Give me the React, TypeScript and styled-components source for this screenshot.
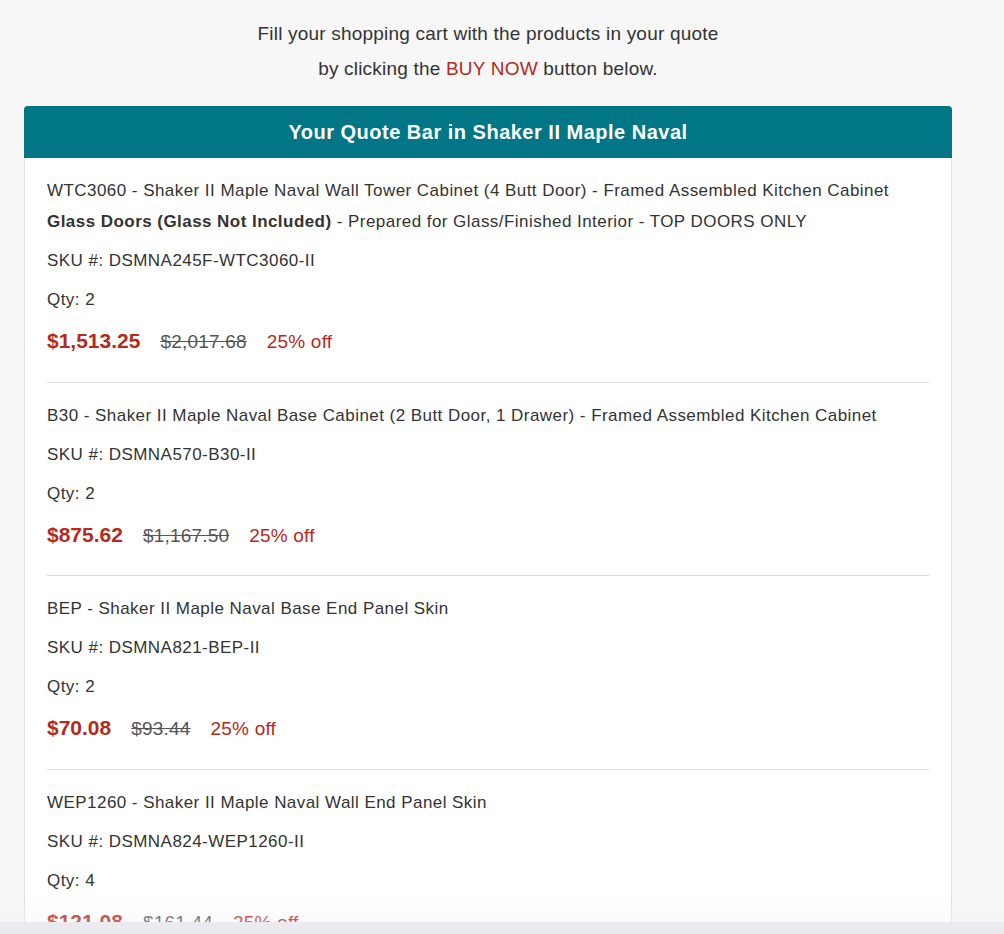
import React from "react";
import styled, {createGlobalStyle} from "styled-components";

interface QuoteItem {
    title: React.ReactNode;
    sku: string;
    qty: number;
    price: string;
    was: string;
    off: string;
}

const ITEMS: QuoteItem[] = [
    {
        title: (
            <>
                WTC3060 - Shaker II Maple Naval Wall Tower Cabinet (4 Butt Door) - Framed Assembled Kitchen Cabinet{" "}
                <b>Glass Doors (Glass Not Included)</b> - Prepared for Glass/Finished Interior - TOP DOORS ONLY
            </>
        ),
        sku: "DSMNA245F-WTC3060-II",
        qty: 2,
        price: "$1,513.25",
        was: "$2,017.68",
        off: "25% off",
    },
    {
        title: "B30 - Shaker II Maple Naval Base Cabinet (2 Butt Door, 1 Drawer) - Framed Assembled Kitchen Cabinet",
        sku: "DSMNA570-B30-II",
        qty: 2,
        price: "$875.62",
        was: "$1,167.50",
        off: "25% off",
    },
    {
        title: "BEP - Shaker II Maple Naval Base End Panel Skin",
        sku: "DSMNA821-BEP-II",
        qty: 2,
        price: "$70.08",
        was: "$93.44",
        off: "25% off",
    },
    {
        title: "WEP1260 - Shaker II Maple Naval Wall End Panel Skin",
        sku: "DSMNA824-WEP1260-II",
        qty: 4,
        price: "$121.08",
        was: "$161.44",
        off: "25% off",
    },
];

export default function App() {
    return (
        <>
            <GlobalStyle />
            <Page>
                <Intro>
                    Fill your shopping cart with the products in your quote
                    <br />
                    by clicking the <Red>BUY NOW</Red> button below.
                </Intro>
                <Card>
                    <Header>Your Quote Bar in Shaker II Maple Naval</Header>
                    <List>
                        {ITEMS.map((it, i) => (
                            <Item key={i}>
                                <Line>{it.title}</Line>
                                <Line>SKU #: {it.sku}</Line>
                                <Line>Qty: {it.qty}</Line>
                                <PriceRow>
                                    <Price>{it.price}</Price>
                                    <Was>{it.was}</Was>
                                    <Off>{it.off}</Off>
                                </PriceRow>
                            </Item>
                        ))}
                    </List>
                </Card>
            </Page>
            <BottomFade />
        </>
    );
}

// ---------------------------------------------------------------------------
// Styles
// ---------------------------------------------------------------------------

const RED = "#b52a1c";

const GlobalStyle = createGlobalStyle`
    html, body {
        margin: 0;
        padding: 0;
        background: #f7f7f7;
        overflow: hidden;
    }
    body {
        font-family: "Liberation Sans", Arial, Helvetica, sans-serif;
        color: #333;
    }
`;

const Page = styled.div`
    width: 928px;
    padding: 16px 0 0 24px;
`;

const Intro = styled.p`
    margin: 0 0 20px;
    text-align: center;
    font-size: 19px;
    letter-spacing: 0.2px;
    line-height: 35px;
    color: #333;
`;

const Red = styled.span`
    color: ${RED};
`;

const Card = styled.div`
    background: #fff;
    border: 1px solid #e2e2e2;
    border-top: none;
    border-radius: 4px 4px 0 0;
`;

const Header = styled.div`
    margin: 0 -1px;
    height: 52px;
    background: #007686;
    border-radius: 4px 4px 0 0;
    color: #fff;
    font-weight: 700;
    font-size: 20px;
    letter-spacing: 0.5px;
    display: flex;
    align-items: center;
    justify-content: center;
`;

const List = styled.div`
    padding: 0 22px;
`;

const Item = styled.div`
    padding: 17px 0 21.5px;
    border-bottom: 1px solid #dcdcdc;
`;

const Line = styled.p`
    margin: 0 0 8px;
    font-size: 17px;
    letter-spacing: 0.45px;
    line-height: 31px;
    color: #333;
`;

const PriceRow = styled.div`
    display: flex;
    align-items: baseline;
    gap: 20px;
    line-height: 36px;
`;

const Price = styled.span`
    color: ${RED};
    font-weight: 700;
    font-size: 21px;
`;

const Was = styled.span`
    color: #555;
    font-size: 19px;
    letter-spacing: 0.2px;
    text-decoration: line-through;
`;

const Off = styled.span`
    color: ${RED};
    font-size: 19px;
    letter-spacing: 0.2px;
`;

const BottomFade = styled.div`
    position: fixed;
    left: 0;
    right: 0;
    bottom: 0;
    height: 40px;
    pointer-events: none;
    background: linear-gradient(
        to bottom,
        rgba(240, 240, 245, 0) 0%,
        rgba(240, 240, 245, 0.3) 70%,
        #ebebef 70%,
        #ebebef 100%
    );
`;
